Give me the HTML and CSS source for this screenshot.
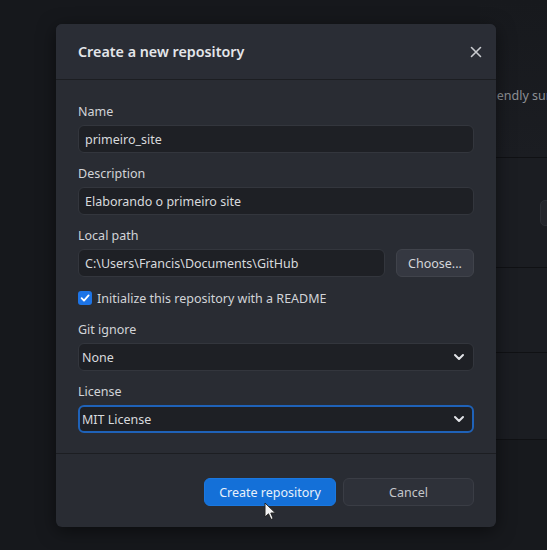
FILE: index.html
```html
<!DOCTYPE html>
<html>
<head>
<meta charset="utf-8">
<link rel="stylesheet" href="styles.css">
</head>
<body>
<div class="app">
  <div class="side"></div>
  <div class="main">
    <section class="sec sec1"><p class="hint">friendly summary</p></section>
    <section class="sec sec2"><span class="ghost-btn"></span></section>
    <section class="sec sec3"></section>
    <section class="sec sec4"></section>
    <section class="sec sec5"></section>
  </div>
</div>

<div class="dialog">
  <header class="dlg-head">
    <h1 class="dlg-title">Create a new repository</h1>
    <svg class="close" width="12" height="12" viewBox="0 0 12 12"><path d="M1.5 1.5 L10.5 10.5 M10.5 1.5 L1.5 10.5" stroke="#c9cbcf" stroke-width="1.6" stroke-linecap="round"/></svg>
  </header>
  <div class="dlg-body">
    <div class="field">
      <label class="lbl">Name</label>
      <div class="input">primeiro_site</div>
    </div>
    <div class="field">
      <label class="lbl">Description</label>
      <div class="input">Elaborando o primeiro site</div>
    </div>
    <div class="field">
      <label class="lbl">Local path</label>
      <div class="path-row">
        <div class="input grow">C:\Users\Francis\Documents\GitHub</div>
        <button class="btn choose">Choose...</button>
      </div>
    </div>
    <div class="check-row">
      <span class="checkbox"><svg width="10" height="10" viewBox="0 0 10 10"><path d="M1.6 5.2 L4 7.6 L8.6 2.4" fill="none" stroke="#fff" stroke-width="1.8" stroke-linecap="round" stroke-linejoin="round"/></svg></span>
      <span class="check-lbl">Initialize this repository with a README</span>
    </div>
    <div class="field gi">
      <label class="lbl">Git ignore</label>
      <div class="input select">None<svg class="chev" width="12" height="8" viewBox="0 0 12 8"><path d="M2 2 L6 6 L10 2" fill="none" stroke="#e2e4e8" stroke-width="2" stroke-linecap="round" stroke-linejoin="round"/></svg></div>
    </div>
    <div class="field">
      <label class="lbl">License</label>
      <div class="input select focus">MIT License<svg class="chev" width="12" height="8" viewBox="0 0 12 8"><path d="M2 2 L6 6 L10 2" fill="none" stroke="#e2e4e8" stroke-width="2" stroke-linecap="round" stroke-linejoin="round"/></svg></div>
    </div>
  </div>
  <footer class="dlg-foot">
    <button class="btn primary">Create repository</button>
    <button class="btn cancel">Cancel</button>
  </footer>
</div>

<svg class="cursor" width="14" height="20" viewBox="0 0 14 20"><path d="M1 1 L1 15 L4.5 11.8 L7 17.5 L9.2 16.5 L6.8 11 L11.5 11 Z" fill="#f2f2f2" stroke="#222" stroke-width="1"/></svg>
</body>
</html>
```
FILE: styles.css
```css
* { box-sizing: border-box; }
html, body { margin: 0; padding: 0; }
body {
  width: 547px;
  height: 550px;
  overflow: hidden;
  background: #16181c;
  font-family: "Noto Sans", "Open Sans", sans-serif;
  color: #d6d8dc;
  position: relative;
}
.app { display: flex; height: 550px; }
.side { width: 480px; background: #16181c; }
.main { flex: 1; display: flex; flex-direction: column; background: #1b1d22; overflow: hidden; }
.sec { border-bottom: 1px solid #101114; position: relative; }
.sec1 { height: 158px; background: linear-gradient(#17191d, #1b1d22); }
.sec2 { height: 110px; }
.sec3 { height: 85px; }
.sec4 { height: 87px; }
.sec5 { flex: 1; border-bottom: none; background: #17191d; }
.hint { margin: 0; position: absolute; left: 4px; top: 87px; font-size: 12.5px; color: #8d9095; white-space: nowrap; }
.ghost-btn { position: absolute; left: 60px; top: 42px; width: 30px; height: 26px; border-radius: 5px; background: #24262c; border: 1px solid #2c2f35; }

.dialog {
  position: absolute;
  left: 56px;
  top: 24px;
  width: 440px;
  height: 503px;
  background: #292c33;
  border-radius: 6px;
  box-shadow: 0 4px 18px rgba(0,0,0,0.5);
  display: flex;
  flex-direction: column;
}
.dlg-head {
  height: 56px;
  padding: 0 14px 0 22px;
  display: flex;
  align-items: center;
  justify-content: space-between;
  border-bottom: 1px solid #1c1e22;
  background: #2a2d35;
  border-radius: 6px 6px 0 0;
}
.dlg-title { margin: 0; font-size: 14.3px; font-weight: 600; color: #e4e6ea; }
.dlg-body {
  padding: 22px 22px 20px 22px;
  display: flex;
  flex-direction: column;
  border-bottom: 1px solid #1c1e22;
}
.field { display: flex; flex-direction: column; margin-bottom: 11px; }
.field:last-child { margin-bottom: 0; }
.field.gi { margin-top: 12px; }
.lbl { font-size: 12.5px; line-height: 20px; margin-bottom: 3px; color: #d2d4d8; }
.input {
  height: 28px;
  background: #1e2025;
  border: 1px solid #33363d;
  border-radius: 6px;
  padding: 0 6px;
  display: flex;
  align-items: center;
  font-size: 12.5px;
  color: #d8dadd;
}
.path-row { display: flex; gap: 11px; }
.grow { flex: 1; }
.btn {
  font-family: inherit;
  font-size: 12.5px;
  height: 28px;
  border-radius: 6px;
  cursor: default;
}
.choose { width: 78px; background: #353841; border: 1px solid #40434b; color: #d4d6da; padding: 0; }
.check-row { display: flex; align-items: center; height: 20px; gap: 5px; }
.checkbox {
  width: 14px; height: 14px; border-radius: 3px; background: #1d74e6;
  display: flex; align-items: center; justify-content: center;
}
.check-lbl { font-size: 12.5px; color: #d2d4d8; }
.select { justify-content: space-between; padding: 0 8px 0 3px; }
.focus { border: 2px solid #1f62b8; padding: 0 7px 0 2px; }
.dlg-foot {
  flex: 1;
  display: flex;
  justify-content: flex-end;
  align-items: flex-start;
  gap: 7px;
  padding: 24px 22px 0 0;
}
.primary { width: 132px; background: #1470d8; border: 1px solid #1a78e0; color: #e8f0fb; padding: 0; }
.cancel { width: 131px; background: #2e3139; border: 1px solid #3a3d45; color: #c4c6ca; padding: 0; }
.cursor { position: absolute; left: 264px; top: 502px; }
```
